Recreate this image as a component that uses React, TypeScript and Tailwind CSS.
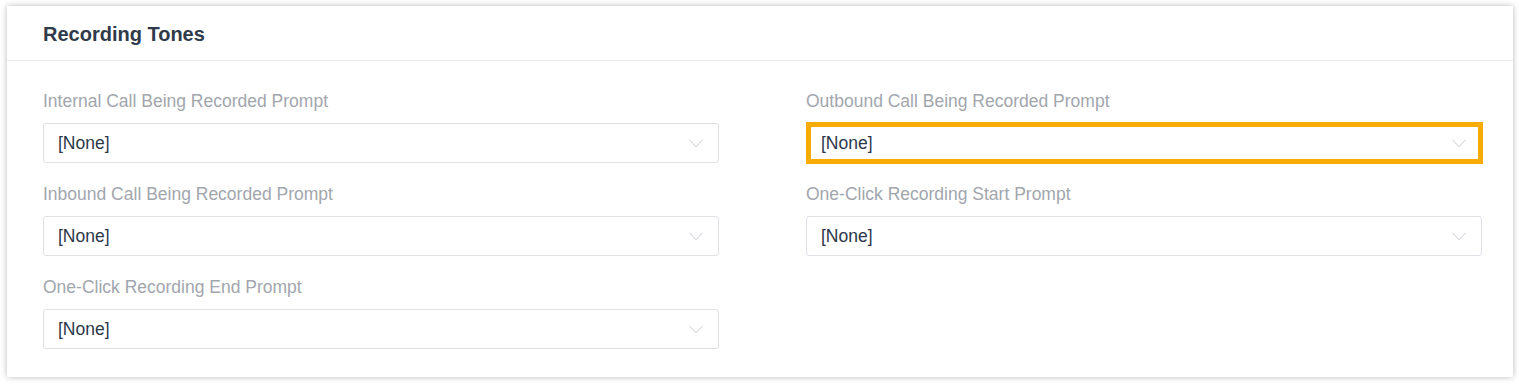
import React from "react";

const FIELDS: { label: string; value: string; focused?: boolean }[] = [
  { label: "Internal Call Being Recorded Prompt", value: "[None]" },
  { label: "Outbound Call Being Recorded Prompt", value: "[None]", focused: true },
  { label: "Inbound Call Being Recorded Prompt", value: "[None]" },
  { label: "One-Click Recording Start Prompt", value: "[None]" },
  { label: "One-Click Recording End Prompt", value: "[None]" },
];

function Chevron() {
  return (
    <svg width="14" height="9" viewBox="0 0 14 9" fill="none" className="text-[#c8cbd1]">
      <path d="M0.5 0.8 L7 7.8 L13.5 0.8" stroke="currentColor" strokeWidth="1" />
    </svg>
  );
}

function SelectField({ label, value, focused }: { label: string; value: string; focused?: boolean }) {
  return (
    <div className="flex flex-col">
      <div className="h-[22px] leading-[22px] text-[17.5px] text-[#a2a6ad] mb-[11px] whitespace-nowrap">{label}</div>
      <div className="relative">
        <div className="h-[40px] flex items-center justify-between border border-[#dfe1e6] rounded-[3px] bg-white pl-[14px] pr-[15px]">
          <span className="text-[17.5px] text-[#2c3849]">{value}</span>
          <Chevron />
        </div>
        {focused && (
          <div className="absolute left-0 -right-[1px] -top-[1px] -bottom-[1px] border-[5px] border-[#f8ab00] pointer-events-none" />
        )}
      </div>
    </div>
  );
}

export default function App() {
  return (
    <div className="w-[1519px] h-[384px] bg-white pt-[6px] pl-[7px] font-['Liberation_Sans',Arial,sans-serif]">
      <div className="w-[1506px] h-[371px] bg-white shadow-[0_0_6px_rgba(0,0,0,0.28)]">
        {/* header */}
        <div className="h-[55px] border-b border-[#ececee] pl-[36px] pt-[2px] flex items-center">
          <h2 className="text-[20px] font-bold text-[#2f3a4a]">Recording Tones</h2>
        </div>

        <div className="pl-[36px] pr-[31px] pt-[29px] grid grid-cols-2 gap-x-[87px] gap-y-[20px]">
          {FIELDS.map((f) => (
            <SelectField key={f.label} label={f.label} value={f.value} focused={f.focused} />
          ))}
        </div>
      </div>
    </div>
  );
}
